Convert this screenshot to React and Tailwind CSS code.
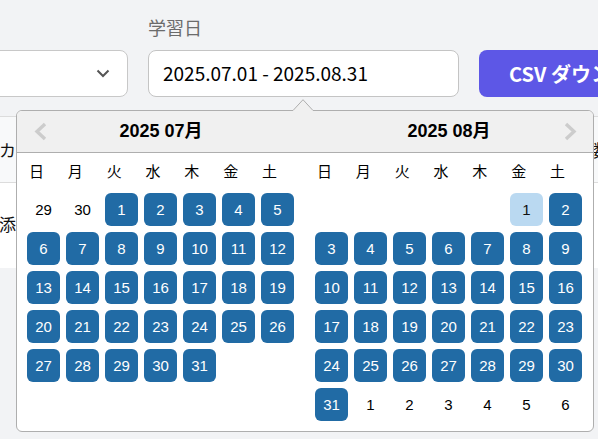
import React from "react";

const WEEK = ["日", "月", "火", "水", "木", "金", "土"];

function buildJuly() {
  const cells = [];
  cells.push({ d: 29, t: "out" }, { d: 30, t: "out" });
  for (let i = 1; i <= 31; i++) cells.push({ d: i, t: "sel" });
  return cells;
}

function buildAug() {
  const cells = [];
  for (let i = 0; i < 5; i++) cells.push({ d: null, t: "blank" });
  cells.push({ d: 1, t: "kb" });
  for (let i = 2; i <= 31; i++) cells.push({ d: i, t: "sel" });
  for (let i = 1; i <= 6; i++) cells.push({ d: i, t: "out" });
  return cells;
}

function Day({ c }) {
  if (c.t === "blank") return <div className="w-[33px] h-[33px] m-[3px]" />;
  const cls =
    c.t === "sel"
      ? "bg-[#216ba5] text-white"
      : c.t === "kb"
      ? "bg-[#bad9f1] text-[#111]"
      : "text-black";
  return (
    <div
      className={`w-[33px] h-[33px] m-[3px] rounded-[6px] flex items-center justify-center text-[15px] leading-none ${cls}`}
    >
      {c.d}
    </div>
  );
}

function Month({ cells }) {
  return (
    <div className="w-[288px] pb-[7px]">
      <div className="w-[272px] h-[37px] flex items-center">
        {WEEK.map((w) => (
          <div key={w} className="flex-1 text-center text-[15px] leading-none text-black">
            {w}
          </div>
        ))}
      </div>
      <div className="pl-[7px] w-[280px] flex flex-wrap">
        {cells.map((c, i) => (
          <Day key={i} c={c} />
        ))}
      </div>
    </div>
  );
}

function Chevron({ dir }) {
  return (
    <svg width="14" height="19" viewBox="0 0 14 19" fill="none">
      {dir === "left" ? (
        <polyline points="11,2 3,9.5 11,17" stroke="#cccccc" strokeWidth="3.4" strokeLinejoin="miter" />
      ) : (
        <polyline points="3,2 11,9.5 3,17" stroke="#cccccc" strokeWidth="3.4" strokeLinejoin="miter" />
      )}
    </svg>
  );
}

export default function App() {
  return (
    <div
      className="relative w-[598px] h-[439px] overflow-hidden bg-[#f2f3f5]"
      style={{ fontFamily: '"Noto Sans CJK JP", "Noto Sans", sans-serif' }}
    >
      {/* filter row */}
      <div className="flex items-end gap-5 pt-[14px] -ml-[60px] w-[800px]">
        <div className="shrink-0 w-[188px] h-[47px] bg-white border border-[#c8c8c8] rounded-[8px] flex items-center justify-end pr-[17px]">
          <svg width="14" height="9" viewBox="0 0 14 9" fill="none">
            <polyline points="1.5,1.5 7,7 12.5,1.5" stroke="#555" strokeWidth="2" />
          </svg>
        </div>
        <div className="shrink-0 flex flex-col w-[311px]">
          <div className="h-[26px] leading-[26px] text-[18px] text-[#6b6b6b] mb-[10px]">学習日</div>
          <div className="h-[47px] bg-white border border-[#c4c4c4] rounded-[8px] flex items-center pl-[14px] text-[19px] text-black">
            2025.07.01 - 2025.08.31
          </div>
        </div>
        <button className="shrink-0 h-[47px] w-[200px] rounded-[8px] bg-[#5d57e6] text-white font-bold text-[20px] text-left pl-[30px] whitespace-nowrap">
          CSV ダウンロード
        </button>
      </div>

      {/* table behind */}
      <div className="mt-[19px] border-t border-[#dcdcdc]">
        <div className="h-[66px] bg-[#f8f9fa] border-b border-[#dcdcdc] flex items-center justify-between text-[17px] text-[#111] -ml-[1px] -mr-[12px]">
          <span>カテゴリ</span>
          <span>提出数</span>
        </div>
        <div className="h-[85px] bg-white pt-[28px] text-[17px] text-[#111] -ml-[1px]">添削課題</div>
      </div>

      {/* datepicker popup */}
      <div
        className="absolute left-[16px] top-[110px] w-[578px] bg-white border border-[#aeaeae] rounded-[6px] overflow-hidden"
        style={{ fontFamily: '"Liberation Sans", Arial, "Noto Sans CJK JP", sans-serif' }}
      >
        <div className="flex h-[42px] bg-[#f0f0f0] border-b border-[#aeaeae]">
          <div className="relative w-[288px] flex items-center justify-center">
            <div className="absolute left-[17px] top-[11px]">
              <Chevron dir="left" />
            </div>
            <span className="text-[18px] font-bold text-black">2025 07月</span>
          </div>
          <div className="relative w-[288px] flex items-center justify-center">
            <span className="text-[18px] font-bold text-black">2025 08月</span>
            <div className="absolute right-[16px] top-[11px]">
              <Chevron dir="right" />
            </div>
          </div>
        </div>
        <div className="flex">
          <Month cells={buildJuly()} />
          <Month cells={buildAug()} />
        </div>
      </div>

      {/* triangle */}
      <svg className="absolute left-[293px] top-[99px]" width="20" height="13" viewBox="0 0 20 13">
        <polygon points="0,11 10,0.5 20,11 20,13 0,13" fill="#f0f0f0" />
        <polyline points="0,11.5 10,0.7 20,11.5" fill="none" stroke="#aeaeae" strokeWidth="1" />
      </svg>
    </div>
  );
}
